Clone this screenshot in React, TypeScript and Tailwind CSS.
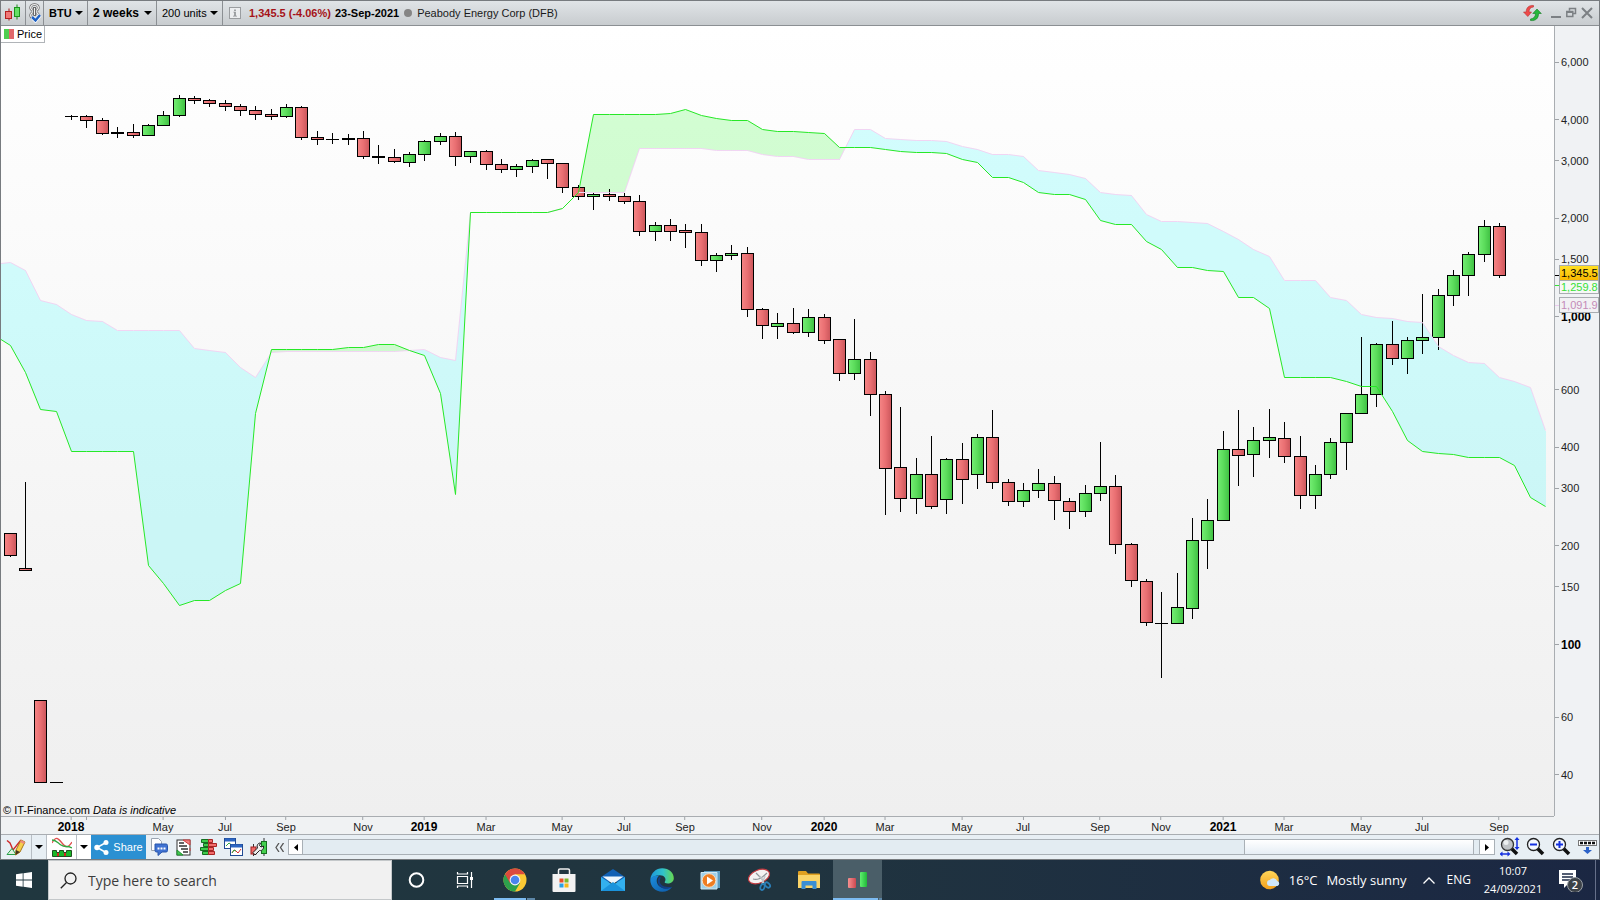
import type { ReactNode } from "react";

type Kind = "u" | "d";
// [kind, high, body top, body bottom, low], in plot rows
type Candle = [Kind, number, number, number, number];

const PLOT = { x: 1, y: 26, w: 1553, h: 790 };

const CANDLES: Candle[] = [
  ["d", 533, 533, 555, 556], ["d", 482, 568, 570, 570], ["d", 700, 700, 782, 782], ["d", 782, 782, 782, 782],
  ["d", 115, 116, 116, 119], ["d", 115, 116, 120, 127], ["d", 118, 120, 133, 134], ["d", 127, 132, 133, 137],
  ["d", 124, 132, 135, 137], ["u", 124, 125, 135, 135], ["u", 111, 115, 125, 125], ["u", 95, 98, 115, 116],
  ["d", 96, 98, 100, 103], ["d", 99, 100, 103, 106], ["d", 100, 103, 106, 110], ["d", 104, 106, 110, 115],
  ["d", 106, 110, 114, 119], ["d", 109, 114, 116, 119], ["u", 104, 107, 116, 117], ["d", 106, 107, 137, 139],
  ["d", 131, 137, 139, 144], ["d", 133, 139, 139, 143], ["d", 134, 138, 139, 144], ["d", 131, 138, 156, 158],
  ["d", 145, 156, 157, 163], ["d", 149, 157, 161, 162], ["u", 152, 154, 162, 166], ["u", 140, 141, 154, 160],
  ["u", 133, 136, 141, 144], ["d", 132, 136, 156, 165], ["u", 151, 151, 156, 162], ["d", 150, 151, 164, 169],
  ["d", 159, 164, 169, 172], ["u", 164, 166, 169, 176], ["u", 159, 160, 166, 172], ["d", 159, 159, 163, 178],
  ["d", 163, 163, 187, 192], ["d", 185, 187, 196, 199], ["u", 193, 194, 196, 209], ["d", 189, 194, 196, 200],
  ["d", 193, 196, 201, 203], ["d", 195, 201, 231, 235], ["u", 222, 225, 231, 240], ["d", 219, 225, 231, 240],
  ["d", 224, 230, 232, 247], ["d", 224, 232, 260, 265], ["u", 253, 255, 260, 271], ["u", 245, 253, 255, 259],
  ["d", 247, 253, 309, 316], ["d", 308, 309, 325, 338], ["u", 313, 323, 326, 338], ["d", 308, 323, 332, 333],
  ["u", 309, 317, 332, 336], ["d", 314, 317, 340, 343], ["d", 339, 339, 373, 380], ["u", 319, 359, 373, 379],
  ["d", 352, 359, 394, 415], ["d", 391, 394, 468, 514], ["d", 407, 467, 498, 511], ["u", 458, 474, 498, 513],
  ["d", 436, 474, 506, 508], ["u", 458, 459, 499, 513], ["d", 443, 459, 479, 503], ["u", 434, 437, 474, 488],
  ["d", 410, 437, 482, 488], ["d", 479, 482, 501, 505], ["u", 483, 490, 501, 506], ["u", 469, 483, 490, 497],
  ["d", 476, 483, 500, 519], ["d", 498, 501, 511, 528], ["u", 485, 493, 511, 516], ["u", 442, 486, 493, 500],
  ["d", 475, 486, 544, 553], ["d", 543, 544, 580, 586], ["d", 579, 581, 622, 625], ["d", 592, 623, 623, 677],
  ["u", 573, 607, 623, 623], ["u", 518, 540, 608, 618], ["u", 499, 520, 540, 568], ["u", 431, 449, 520, 520],
  ["d", 410, 449, 455, 485], ["u", 427, 440, 454, 476], ["u", 409, 437, 440, 457], ["d", 422, 438, 456, 462],
  ["d", 436, 456, 495, 508], ["u", 465, 474, 495, 508], ["u", 438, 442, 474, 478], ["u", 413, 413, 442, 469],
  ["u", 337, 394, 413, 413], ["u", 343, 344, 394, 406], ["d", 321, 344, 358, 364], ["u", 337, 340, 358, 373],
  ["u", 294, 337, 340, 353], ["u", 289, 295, 337, 349], ["u", 270, 275, 295, 305], ["u", 252, 254, 275, 295],
  ["u", 220, 226, 254, 261], ["d", 223, 226, 275, 277],
];

// Ichimoku spans, one value per unit
const SPAN_A = [
  345, 372, 409, 411, 451, 451, 451, 451, 451, 565, 583, 605, 600, 600, 590, 583, 413, 349, 349, 349,
  349, 349, 347, 347, 344, 344, 350, 355, 393, 494, 212, 212, 212, 212, 212, 212, 208, 192, 114, 114,
  114, 114, 114, 113, 109, 115, 118, 120, 120, 129, 131, 131, 132, 133, 147, 147, 147, 149, 151, 152,
  152, 153, 159, 162, 177, 177, 182, 192, 194, 194, 199, 220, 224, 224, 241, 249, 267, 267, 270, 271,
  297, 297, 308, 377, 377, 377, 377, 381, 386, 386, 411, 440, 451, 453, 454, 457, 457, 457, 465, 497, 506,
];
const SPAN_B = [
  262, 270, 300, 304, 314, 320, 321, 330, 330, 330, 330, 330, 348, 350, 352, 367, 377, 352, 351, 351,
  351, 351, 351, 351, 351, 351, 350, 349, 357, 360, 212, 212, 212, 212, 212, 212, 208, 192, 192, 192,
  192, 148, 148, 148, 148, 148, 150, 150, 150, 154, 156, 156, 159, 159, 159, 129, 129, 138, 139, 140,
  140, 141, 146, 149, 154, 154, 156, 170, 172, 174, 178, 192, 194, 195, 214, 221, 221, 222, 223, 231,
  239, 249, 256, 280, 280, 280, 297, 300, 314, 317, 318, 321, 322, 346, 355, 362, 363, 377, 381, 387, 430,
];

const TIME_LABELS: [number, string][] = [
  [4, "2018"], [10, "May"], [14, "Jul"], [18, "Sep"], [23, "Nov"], [27, "2019"], [31, "Mar"], [36, "May"],
  [40, "Jul"], [44, "Sep"], [49, "Nov"], [53, "2020"], [57, "Mar"], [62, "May"], [66, "Jul"], [71, "Sep"],
  [75, "Nov"], [79, "2021"], [83, "Mar"], [88, "May"], [92, "Jul"], [97, "Sep"],
];

const PRICES = [6000, 4000, 3000, 2000, 1500, 1000, 600, 400, 300, 200, 150, 100, 60, 40];

const unitX = (i: number) => Math.floor(10.2 + 15.355 * i);
const priceY = (p: number) => 317 + Math.log10(1000 / p) * 327.5;
const pctX = (x: number) => `${((x - PLOT.x) / PLOT.w) * 100}%`;
const pctY = (y: number) => `${((y - PLOT.y) / PLOT.h) * 100}%`;

type Point = { x: number; a: number; b: number };
const POINTS: Point[] = [
  { x: 1, a: 339.5, b: 263.5 },
  ...SPAN_A.map((a, i) => ({ x: unitX(i) + 0.5, a: a + 0.5, b: SPAN_B[i] + 0.5 })),
];

// splits the cloud wherever the two spans cross
function cloudPath(bullish: boolean) {
  let d = "";
  for (let i = 1; i < POINTS.length; i++) {
    let p = POINTS[i - 1];
    let q = POINTS[i];
    const dp = p.b - p.a;
    const dq = q.b - q.a;
    if (dp * dq < 0) {
      const t = dp / (dp - dq);
      const y = p.a + (q.a - p.a) * t;
      const mid = { x: p.x + (q.x - p.x) * t, a: y, b: y };
      if (dp > 0 === bullish) q = mid;
      else p = mid;
    } else if (dp + dq > 0 !== bullish) continue;
    d += `M${p.x} ${p.a}L${q.x} ${q.a}L${q.x} ${q.b}L${p.x} ${p.b}Z`;
  }
  return d;
}

const linePath = (key: "a" | "b") => "M" + POINTS.map((p) => `${p.x} ${p[key]}`).join("L");

function PriceChart() {
  return (
    <svg
      className="block h-full w-full"
      viewBox={`${PLOT.x} ${PLOT.y} ${PLOT.w} ${PLOT.h}`}
      preserveAspectRatio="none"
      role="img"
      aria-label="Peabody Energy Corp price"
    >
      <defs>
        <linearGradient id="up">
          <stop offset="0" stopColor="#74ee74" />
          <stop offset="0.5" stopColor="#5bdc5b" />
          <stop offset="1" stopColor="#3fbf43" />
        </linearGradient>
        <linearGradient id="down">
          <stop offset="0" stopColor="#f58585" />
          <stop offset="0.5" stopColor="#e96f72" />
          <stop offset="1" stopColor="#cb565b" />
        </linearGradient>
      </defs>
      <g shapeRendering="crispEdges">
        <path d={cloudPath(false)} fill="#00ffff" fillOpacity="0.17" />
        <path d={cloudPath(true)} fill="#00ff00" fillOpacity="0.17" />
      </g>
      <g stroke="#000" shapeRendering="crispEdges">
        {CANDLES.map(([kind, high, top, bottom, low], i) => {
          const x = unitX(i);
          return (
            <g key={i}>
              {low > high && <path d={`M${x + 0.5} ${high}V${low + 1}`} />}
              {bottom > top ? (
                <rect
                  x={x - 5.5}
                  y={top + 0.5}
                  width="12"
                  height={bottom - top}
                  fill={kind === "u" ? "url(#up)" : "url(#down)"}
                />
              ) : (
                <path d={`M${x - 6} ${top + 0.5}h13`} />
              )}
            </g>
          );
        })}
      </g>
      <path d={linePath("b")} fill="none" stroke="#f1d5f3" />
      <path d={linePath("a")} fill="none" stroke="#27e827" />
    </svg>
  );
}

function Caret() {
  return <span className="block h-0 w-0 border-x-[4px] border-t-[4px] border-x-transparent border-t-black" />;
}

function Picker({ label, value, options, className }: { label: string; value: string; options: string[]; className: string }) {
  return (
    <label className={`relative flex h-full items-center border-r border-[#8b8f93] ${className}`}>
      <select aria-label={label} defaultValue={value} className="h-full w-full appearance-none bg-transparent pl-[5px]">
        {options.map((o) => (
          <option key={o}>{o}</option>
        ))}
      </select>
      <span className="pointer-events-none absolute right-1">
        <Caret />
      </span>
    </label>
  );
}

function TopBar() {
  return (
    <header className="flex h-[25px] shrink-0 items-center border-b border-[#8b8f93] bg-linear-to-b from-[#e0e4e7] to-[#c8cccf]">
      <button aria-label="Chart type" className="flex h-full w-[25px] items-center justify-center border-r border-[#8b8f93]">
        <svg width="18" height="18" viewBox="0 0 18 18">
          <path d="M5 4.500v12" stroke="#a01818" />
          <rect x="1.500" y="7.500" width="6" height="7" fill="#f07878" stroke="#b42020" />
          <path d="M13 .5v15" stroke="#1c8c1c" />
          <rect x="10.500" y="3.500" width="5" height="9" fill="#66e066" stroke="#1c941c" />
        </svg>
      </button>
      <button aria-label="Link window" className="flex h-full w-[18px] items-center justify-center border-r border-[#8b8f93]">
        <svg width="14" height="20" viewBox="0 0 14 20" fill="none">
          <path d="M4.500 7.500C1 5 3 1.500 6.500 1.500s5.500 3.500 2 6M4.500 9.500C1 12 3 15.500 6.500 15.500s5.500-3.500 2-6" stroke="#6a6a6a" strokeWidth="2.600" />
          <path d="M4.500 7.500C1 5 3 1.500 6.500 1.500s5.500 3.500 2 6M4.500 9.500C1 12 3 15.500 6.500 15.500s5.500-3.500 2-6" stroke="#f2f2f2" strokeWidth="1.200" />
          <path d="M6.500 4v9" stroke="#6a6a6a" strokeWidth="3" />
          <path d="M6.500 5v7" stroke="#f2f2f2" />
          <path d="m4 14 3.500 3.500L12 12" stroke="#fff" strokeWidth="4" />
          <path d="m4 14 3.500 3.500L12 12" stroke="#1f62c4" strokeWidth="2.500" />
        </svg>
      </button>
      <Picker label="Symbol" value="BTU" options={["BTU"]} className="w-[44px] font-bold" />
      <Picker label="Timeframe" value="2 weeks" options={["1 week", "2 weeks"]} className="w-[69px] text-[12px] font-bold" />
      <Picker label="Units" value="200 units" options={["200 units", "500 units"]} className="w-[66px]" />
      <button aria-label="Instrument information" className="ml-[6px] flex size-[12px] items-center justify-center border border-[#9a9da0] bg-[#eceef0]">
        <svg width="4" height="8" viewBox="0 0 5 9" fill="#8d9093">
          <path d="M1.500 0h2v2h-2zM.5 3h3v5H5v1H0V8h1.500V4h-1z" />
        </svg>
      </button>
      <p className="ml-2 flex items-center gap-1">
        <span className="font-bold text-[#a51218]">1,345.5 (-4.06%)</span>
        <span className="font-bold">23-Sep-2021</span>
        <span className="mx-px size-2 rounded-full bg-[#858585]" />
        <span className="text-[#1a1a1a]">Peabody Energy Corp (DFB)</span>
      </p>
      <div className="ml-auto flex items-center gap-1 pr-[6px]">
        <button aria-label="Refresh" className="mr-[5px]">
          <svg width="19" height="18" viewBox="0 0 19 18" strokeLinejoin="round" strokeWidth=".6">
            <path d="M10.500 1.500C6 .8 3 4 3.200 8H.5l4.300 4.500L8.500 8H6c0-3 1.500-4.800 4.500-5z" fill="#ee4a4a" stroke="#b83030" />
            <path d="M7.500 16.500c5 .7 8.200-2.200 8-7h2.800L14 5 9.800 9.500h2.700c0 3.300-1.700 5-5 5.500z" fill="#27b83a" stroke="#117a22" />
          </svg>
        </button>
        <button aria-label="Minimise">
          <svg width="11" height="12" viewBox="0 0 11 12"><path d="M0 10h10" stroke="#7c8084" strokeWidth="2" /></svg>
        </button>
        <button aria-label="Restore">
          <svg width="11" height="12" viewBox="0 0 11 12" fill="none" stroke="#7c8084" strokeWidth="1.500">
            <path d="M3.500 3.500v-2h6v5H7.500M.8 4.500h6v5h-6zM.8 5.200h6" />
          </svg>
        </button>
        <button aria-label="Close">
          <svg width="12" height="12" viewBox="0 0 12 12"><path d="m1 1 10 10M11 1 1 11" stroke="#7c8084" strokeWidth="2" /></svg>
        </button>
      </div>
    </header>
  );
}

const TAGS = [
  { y: 273, text: "1,345.5", style: "h-[16px] bg-linear-to-b from-[#ffe020] to-[#f8b800] text-black" },
  { y: 287, text: "1,259.8", style: "h-[14px] bg-[#f6f8f6] text-[#35e035]" },
  { y: 305, text: "1,091.9", style: "h-[16px] bg-[#f2f1f4] text-[#c48bb8]" },
];

function PriceAxis() {
  return (
    <div className="relative border-l border-[#a9adb1] bg-[#f0f2f4]">
      {PRICES.map((p) => {
        const major = p === 1000 || p === 100;
        return (
          <div key={p} className="absolute left-0 flex h-4 -translate-y-1/2 items-center gap-[2px]" style={{ top: pctY(priceY(p)) }}>
            <span className="h-px w-1 bg-[#9fa3a7]" />
            <span className={major ? "text-[12px] font-bold" : "text-[#222]"}>{p.toLocaleString("en-US")}</span>
          </div>
        );
      })}
      <span className="absolute left-0 h-px w-1 bg-black" style={{ top: pctY(275) }} />
      <span className="absolute left-0 h-px w-1 bg-[#35e035]" style={{ top: pctY(285) }} />
      <span className="absolute left-0 h-px w-1 bg-[#ecccee]" style={{ top: pctY(305) }} />
      {TAGS.map((t) => (
        <div
          key={t.text}
          className={`absolute right-0 left-1 flex -translate-y-1/2 items-center border border-[#a9adb1] pl-px ${t.style}`}
          style={{ top: pctY(t.y) }}
        >
          {t.text}
        </div>
      ))}
    </div>
  );
}

function TimeAxis() {
  return (
    <div className="relative h-[18px] border-t border-[#a9adb1]">
      <span className="absolute top-0 h-[3px] w-px bg-[#9fa3a7]" style={{ left: pctX(unitX(5)) }} />
      {TIME_LABELS.map(([i, label]) => (
        <div key={i} className="absolute top-0 flex -translate-x-1/2 flex-col items-center" style={{ left: pctX(unitX(i)) }}>
          <span className="h-[3px] w-px bg-[#9fa3a7]" />
          <span className={/^\d/.test(label) ? "text-[12px] leading-[14px] font-bold" : "leading-[14px] text-[#222]"}>{label}</span>
        </div>
      ))}
    </div>
  );
}

function ToolButton({ label, className = "w-[25px]", children }: { label: string; className?: string; children: ReactNode }) {
  return (
    <button aria-label={label} className={`flex h-full shrink-0 items-center justify-center ${className}`}>
      {children}
    </button>
  );
}

function Lens({ children }: { children: ReactNode }) {
  return (
    <svg width="20" height="20" viewBox="0 0 20 20" fill="none">
      <path d="m11 11 6 6" stroke="#111" strokeWidth="3.500" />
      <circle cx="7.500" cy="7.500" r="6" fill="#f4f8ff" stroke="#222" strokeWidth="1.300" />
      {children}
    </svg>
  );
}

function BottomBar() {
  return (
    <div className="flex h-[25px] shrink-0 items-center border-t border-[#a9adb1] bg-[#e8eff4]">
      <ToolButton label="Drawing tools" className="w-[31px] border-r border-[#b8bec4]">
        <svg width="20" height="18" viewBox="0 0 20 18" fill="none">
          <path d="M1 2.500 4 5l3 7 8-10" stroke="#d02828" strokeWidth="1.400" />
          <path d="M1 16.500h9l-4-6z" fill="#dff2df" stroke="#28a048" />
          <path d="m10 12 5-10 4 2-5 10-4.500 3z" fill="#f7cf4c" stroke="#a87818" />
          <path d="m15 2 4 2-1 2-4-2z" fill="#ef8a80" />
          <path d="m10 12 4 2-4.500 3z" fill="#463420" />
        </svg>
      </ToolButton>
      <ToolButton label="Drawing tools menu" className="w-[15px] border-r border-[#b8bec4]"><Caret /></ToolButton>
      <ToolButton label="Indicators" className="w-[30px] border-r border-[#b8bec4] bg-white">
        <svg width="20" height="20" viewBox="0 0 20 20" fill="none">
          <path d="M0 6c4-7 6-5 10 0s6 5 10-1" stroke="#e05050" strokeWidth="1.300" />
          <path d="M0 3c4 0 5 2 9 5s6 0 11 3" stroke="#30a840" strokeWidth="1.300" />
          <path d="M.5 13.500h4v2h3v-2h4v2h3v-2h5v6H.5z" fill="#18b828" stroke="#205020" />
          <path d="M5 16h2v3H5zM12 16h2v3h-2z" fill="#d42020" />
        </svg>
      </ToolButton>
      <ToolButton label="Indicators menu" className="w-[14px] bg-white"><Caret /></ToolButton>
      <button className="flex h-full w-[55px] shrink-0 items-center justify-center gap-1 bg-[#2b90d2] text-white">
        <svg width="15" height="15" viewBox="0 0 15 15" fill="#fff">
          <path d="m12 2.500-9 5 9 5" fill="none" stroke="#fff" strokeWidth="1.500" />
          <circle cx="12" cy="2.500" r="2.500" />
          <circle cx="3" cy="7.500" r="2.700" />
          <circle cx="12" cy="12.500" r="2.500" />
        </svg>
        Share
      </button>
      <ToolButton label="Comments">
        <svg width="18" height="18" viewBox="0 0 18 18">
          <path d="M1.500.5h7l3 3v9h-10z" fill="#fff" stroke="#9aa4b0" />
          <path d="M5 6h11a1.500 1.500 0 0 1 1.500 1.500v5A1.500 1.500 0 0 1 16 14h-4l-4 3.500V14H6.500A1.500 1.500 0 0 1 5 12.500z" fill="#3f72d2" stroke="#2856ac" />
          <path d="M7.500 9.500h2v2h-2zM10.500 9.500h2v2h-2zM13.500 9.500h2v2h-2z" fill="#fff" />
        </svg>
      </ToolButton>
      <ToolButton label="Order list">
        <svg width="15" height="17" viewBox="0 0 15 17" fill="none">
          <rect x="1" y="1" width="13" height="15" fill="#fff" stroke="#333" />
          <path d="M7 1h7v5zM14 9v3" fill="#f08080" stroke="#d04040" />
          <path d="M1 11v5h6z" fill="#40c850" stroke="#209030" />
          <path d="M3 4h5M3 7h8M5 10h7M7 13h5" stroke="#333" strokeWidth="1.500" />
        </svg>
      </ToolButton>
      <ToolButton label="Order book">
        <svg width="18" height="17" viewBox="0 0 18 17">
          <path d="M1.500.5h7v3h-7zM3.500 4.500h5v3h-5zM.5 8.500h8v3h-8zM2.500 12.500h6v3h-6z" fill="#3ecb4c" stroke="#156f20" />
          <path d="M8.500.5h4v3h-4zM8.500 4.500h8v3h-8zM8.500 8.500h5v3h-5zM8.500 12.500h6v3h-6z" fill="#f06c6c" stroke="#a82424" />
        </svg>
      </ToolButton>
      <ToolButton label="Windows">
        <svg width="19" height="18" viewBox="0 0 19 18" fill="none">
          <rect x=".5" y=".5" width="11" height="10" fill="#fff" stroke="#204a94" />
          <path d="M1 2h10" stroke="#2c66c4" strokeWidth="3" />
          <path d="m2 8 3-3 4 3" stroke="#30a840" />
          <rect x="6.500" y="6.500" width="12" height="11" fill="#fff" stroke="#204a94" />
          <path d="M7 8h11" stroke="#2c66c4" strokeWidth="3" />
          <path d="m8 15 2-3 2 1 2 2 3-4" stroke="#d83030" />
          <path d="m8 15 2-3 2 1" stroke="#30a840" />
        </svg>
      </ToolButton>
      <ToolButton label="Trading system">
        <svg width="18" height="19" viewBox="0 0 18 19">
          <path d="M3.500 6v12M14 0v18" stroke="#333" />
          <rect x="1" y="9" width="5" height="7" fill="#f06868" stroke="#a02020" />
          <rect x="11.500" y="3.500" width="5" height="12" fill="#44d050" stroke="#157020" />
          <path d="M3 14.500 7.500 10c-1-3 .5-5 3-5L9.500 7.500l1.500 1.500 2.500-1c.5 3-1.500 5-4 4.500L5 17z" fill="#eee" stroke="#222" />
        </svg>
      </ToolButton>
      <ToolButton label="Collapse toolbar" className="w-[17px]">
        <svg width="9" height="9" viewBox="0 0 9 9" fill="none" stroke="#555" strokeWidth="1.300"><path d="M4 0 1 4.500 4 9M8.500 0l-3 4.500 3 4.500" /></svg>
      </ToolButton>
      <div className="flex h-4 min-w-0 flex-1 border border-[#a9b0b6] bg-[#e3ecf2]">
        <button aria-label="Scroll left" className="flex w-[14px] items-center justify-center border-r border-[#a9b0b6] bg-white">
          <svg width="4" height="7" viewBox="0 0 4 7"><path d="M4 0v7L0 3.500z" /></svg>
        </button>
        <div className="flex flex-1 justify-end pr-[5px]">
          <div className="w-[230px] border-x border-[#a9b0b6] bg-linear-to-b from-white to-[#e6eef5]" />
        </div>
        <button aria-label="Scroll right" className="flex w-[15px] items-center justify-center border-l border-[#a9b0b6] bg-white">
          <svg width="4" height="7" viewBox="0 0 4 7"><path d="M0 0v7l4-3.500z" /></svg>
        </button>
      </div>
      <ToolButton label="Fit chart" className="ml-[2px] w-[26px]">
        <svg width="20" height="20" viewBox="0 0 20 20" fill="none">
          <path d="m11 11 6 6" stroke="#111" strokeWidth="3.500" />
          <circle cx="7.500" cy="7.500" r="6" fill="#bfc3c6" stroke="#333" strokeWidth="1.300" />
          <circle cx="6" cy="5.500" r="2.500" fill="#eceff0" />
          <path d="M17 2v9M1 17h8" stroke="#1430e0" strokeWidth="1.500" />
          <path d="M17 0l-2.500 3h5zM17 13l-2.500-3h5zM-.5 17l3-2.500v5zM10.500 17l-3-2.500v5z" fill="#1430e0" />
        </svg>
      </ToolButton>
      <ToolButton label="Zoom out" className="w-[26px]">
        <Lens><path d="M4 7.500h7" stroke="#1430e0" strokeWidth="2" /></Lens>
      </ToolButton>
      <ToolButton label="Zoom in" className="w-[26px]">
        <Lens><path d="M4 7.500h7M7.500 4v7" stroke="#1430e0" strokeWidth="2" /></Lens>
      </ToolButton>
      <ToolButton label="Show keyboard" className="w-[24px]">
        <svg width="19" height="16" viewBox="0 0 19 16" fill="none">
          <rect x=".5" y="1.500" width="18" height="5" fill="#fff" stroke="#777" />
          <path d="M2 4h15" stroke="#111" strokeWidth="2.500" strokeDasharray="3 1" />
          <path d="M8 8h3v3h3l-4.500 4L5 11h3z" fill="#2c62c8" />
        </svg>
      </ToolButton>
    </div>
  );
}

const APPS: { label: string; state?: "open" | "active"; icon: ReactNode }[] = [
  {
    label: "Cortana",
    icon: <svg width="18" height="18" viewBox="0 0 18 18"><circle cx="8.500" cy="9" r="6.800" fill="none" stroke="#fff" strokeWidth="2" /></svg>,
  },
  {
    label: "Task view",
    icon: (
      <svg width="20" height="18" viewBox="0 0 20 18" fill="none" stroke="#fff" strokeWidth="1.200">
        <path d="M1.500 5.500h10v7h-10zM1.500 1v2h10V1M1.500 17v-2h10v2M15.500 1v16" />
        <path d="M14 6h3v3h-3z" fill="#fff" stroke="none" />
      </svg>
    ),
  },
  {
    label: "Chrome",
    state: "open",
    icon: (
      <svg width="24" height="24" viewBox="0 0 24 24">
        <circle cx="12" cy="12" r="11.500" fill="#fbc934" />
        <path d="M12 12 2.040 6.250A11.500 11.500 0 0 0 12 23.500l5-8.600z" fill="#2da14c" />
        <path d="M2.040 6.250A11.500 11.500 0 0 1 21.960 6.250H12L7 14.900z" fill="#dc4a3d" />
        <circle cx="12" cy="12" r="5.400" fill="#f5f5f5" />
        <circle cx="12" cy="12" r="4.300" fill="#4a84ee" />
      </svg>
    ),
  },
  {
    label: "Microsoft Store",
    icon: (
      <svg width="24" height="24" viewBox="0 0 24 24" fill="none">
        <path d="M6.500 7V2.500q0-1.500 1.500-1.500h8q1.500 0 1.500 1.500V7" stroke="#f0f0f0" strokeWidth="1.500" />
        <path d="M.5 6h23v17q0 1-1 1h-21q-1 0-1-1z" fill="#f2f2f2" />
        <path d="M7.500 10.500h4v4h-4z" fill="#e8502a" />
        <path d="M12.500 10.500h4v4h-4z" fill="#7db82c" />
        <path d="M7.500 15.500h4v4h-4z" fill="#2ba0e4" />
        <path d="M12.500 15.500h4v4h-4z" fill="#f8b818" />
      </svg>
    ),
  },
  {
    label: "Mail",
    icon: (
      <svg width="24" height="24" viewBox="0 0 24 24">
        <path d="M0 9 12 1l12 8v5H0z" fill="#1160b4" />
        <path d="M1.500 8.500h21L12 16z" fill="#eef6fc" />
        <path d="M0 9v14h24V9l-12 8z" fill="#33b0ee" />
        <path d="m0 23 12-9 12 9z" fill="#1b93dc" />
      </svg>
    ),
  },
  {
    label: "Edge",
    icon: (
      <svg width="24" height="24" viewBox="0 0 24 24">
        <defs>
          <linearGradient id="edgeTop"><stop offset="0" stopColor="#1d98dd" /><stop offset=".55" stopColor="#31c3c9" /><stop offset="1" stopColor="#67d84f" /></linearGradient>
          <linearGradient id="edgeBody" x1="0" y1="0" x2="1" y2="1"><stop offset="0" stopColor="#1c8ede" /><stop offset="1" stopColor="#0d5aa8" /></linearGradient>
        </defs>
        <path d="M.3 11.500C1 5 6 .3 12.200.3 19 .3 24 5 23.800 10.500c-.2 3.500-3 5-6 5-2.400 0-3.600-.8-3-1.700 2-3-.4-6.600-4.800-6.600-4.500 0-8.500 2-9.700 4.300z" fill="url(#edgeTop)" />
        <path d="M.3 11.500C1.500 8.500 5.500 7.200 9.300 7.600 6 10 5.800 15 9 18c4 3.500 9 2.600 13 .7C20 22 16.500 23.800 12.200 23.800 5.500 23.800 0 18.500.3 11.500z" fill="url(#edgeBody)" />
        <path d="M9.300 9C6.800 12 7.500 17 11 19.300c4 2.500 8 1.500 11 0-2.500-.5-9 .5-11.500-3.500-1.500-2.300-.5-4.800.5-6.300z" fill="#123f86" />
      </svg>
    ),
  },
  {
    label: "Media player",
    icon: (
      <svg width="21" height="20" viewBox="0 0 21 20">
        <path d="M4 1h16v17H4z" fill="#5d9cc0" />
        <path d="M1 2.500h16V19H1z" fill="#9cd0ea" stroke="#d0e8f4" />
        <circle cx="9" cy="10.500" r="6.800" fill="#ee7d22" stroke="#f9ddc0" />
        <path d="m7 6.500 6 4-6 4z" fill="#fff" />
      </svg>
    ),
  },
  {
    label: "Snipping tool",
    icon: (
      <svg width="25" height="24" viewBox="0 0 25 24" fill="none">
        <ellipse cx="12" cy="8.500" rx="11" ry="6.500" transform="rotate(-22 12 8.500)" fill="#f4f2f2" stroke="#c43a40" strokeWidth="1.200" />
        <path d="M6 11c3 1 8 0 14-6M9 5l8 8" stroke="#8e9498" strokeWidth="1.200" />
        <path d="m13 8 4 7M18 8l-3 8" stroke="#c2c8cc" strokeWidth="1.500" />
        <ellipse cx="15.500" cy="19" rx="2" ry="3" transform="rotate(20 15.500 19)" stroke="#2b7fb8" strokeWidth="1.800" />
        <ellipse cx="20.500" cy="17" rx="2" ry="3" transform="rotate(-45 20.500 17)" stroke="#2b7fb8" strokeWidth="1.800" />
      </svg>
    ),
  },
  {
    label: "File explorer",
    icon: (
      <svg width="22" height="20" viewBox="0 0 22 20">
        <path d="M0 2q0-1 1-1h7l2 2.500h11q1 0 1 1V18H0z" fill="#e0a020" />
        <path d="M0 5h22v13H0z" fill="#fad468" />
        <path d="M3.500 12q0-1 1-1h13q1 0 1 1v7h-4v-3.500h-7V19h-4z" fill="#3b8fd4" />
      </svg>
    ),
  },
  {
    label: "ProRealTime",
    state: "active",
    icon: (
      <svg width="20" height="18" viewBox="0 0 20 18">
        <defs>
          <linearGradient id="appRed"><stop offset="0" stopColor="#f89090" /><stop offset="1" stopColor="#cc4850" /></linearGradient>
          <linearGradient id="appGreen"><stop offset="0" stopColor="#60f070" /><stop offset="1" stopColor="#20b838" /></linearGradient>
        </defs>
        <rect x="0" y="7" width="8" height="10" rx="1" fill="url(#appRed)" />
        <rect x="12" y="1" width="7" height="15" rx="1" fill="url(#appGreen)" />
      </svg>
    ),
  },
];

function Taskbar() {
  return (
    <footer className="flex h-10 shrink-0 items-stretch bg-linear-to-r from-[#20373f] via-[#20343f] to-[#1b2743] font-['Open_Sans',sans-serif] text-white">
      <button aria-label="Start" className="flex w-12 items-center justify-center">
        <svg width="16" height="16" viewBox="0 0 16 16" fill="#fff">
          <path d="M0 2.200 6.700 1.300v6.300H0zM7.500 1.200 16 0v7.600H7.500zM0 8.400h6.700v6.300L0 13.800zM7.500 8.400H16V16l-8.500-1.200z" />
        </svg>
      </button>
      <label className="flex w-[344px] items-center gap-[11px] border border-[#c4c8ca] bg-[#f1f1f1] pl-[11px]">
        <svg width="17" height="17" viewBox="0 0 17 17" fill="none" stroke="#222" strokeWidth="1.300">
          <circle cx="10.500" cy="6.500" r="5.500" />
          <path d="M6.500 10.500.8 16.200" />
        </svg>
        <input
          type="text"
          aria-label="Type here to search"
          placeholder="Type here to search"
          className="min-w-0 flex-1 bg-transparent text-[14px] text-[#3c3c3c] outline-none placeholder:text-[#3c3c3c]"
        />
      </label>
      <nav className="flex">
        {APPS.map((app) => (
          <button
            key={app.label}
            aria-label={app.label}
            className={`relative flex w-[49px] items-center justify-center ${app.state === "active" ? "bg-[#4a5e68]" : ""}`}
          >
            {app.icon}
            {app.state && (
              <span className={`absolute inset-x-0 bottom-0 flex h-[2px] gap-px ${app.state === "open" ? "px-1" : ""}`}>
                <span className="flex-1 bg-[#7dbcf2]" />
                <span className={app.state === "open" ? "w-2 bg-[#5d87a8]" : "w-[3px] bg-[#5d87a8]"} />
              </span>
            )}
          </button>
        ))}
      </nav>
      <div className="ml-auto flex items-center">
        <button className="flex items-center gap-[9px] text-[13px]">
          <svg width="20" height="20" viewBox="0 0 20 20">
            <defs>
              <linearGradient id="sun" x2="0" y2="1"><stop offset="0" stopColor="#ffd65a" /><stop offset="1" stopColor="#f3a01c" /></linearGradient>
            </defs>
            <circle cx="9.500" cy="10" r="9.300" fill="url(#sun)" />
            <path d="M10 16a3 3 0 0 1 0-6 4 4 0 0 1 7.200 1 2.600 2.600 0 0 1 .3 5z" fill="#cfe7fa" />
          </svg>
          <span>16°C</span>
          <span>Mostly sunny</span>
        </button>
        <button aria-label="Show hidden icons" className="ml-4 flex w-3 justify-center">
          <svg width="12" height="7" viewBox="0 0 12 7" fill="none" stroke="#fff" strokeWidth="1.300"><path d="m.5 6.500 5.500-5.500 5.500 5.500" /></svg>
        </button>
        <button className="ml-3 text-[12px]">ENG</button>
        <button className="ml-3 flex w-[60px] flex-col items-center text-[11px] leading-[18px]">
          <span>10:07</span>
          <span>24/09/2021</span>
        </button>
        <button aria-label="2 notifications" className="relative ml-4 h-6 w-6">
          <svg width="24" height="24" viewBox="0 0 24 24">
            <path d="M0 2h17v14H9l-4 4v-4H0z" fill="#fff" />
            <path d="M3 6h11M3 9h11M3 12h8" stroke="#1c2a45" strokeWidth="1.300" />
            <circle cx="16" cy="17" r="7.500" fill="#3c4248" stroke="#9aa0a6" />
          </svg>
          <span className="absolute top-[10px] left-3 w-2 text-center text-[11px] leading-[14px] font-semibold">2</span>
        </button>
        <span className="ml-3 h-10 w-[5px] border-l border-[#66708a]" />
      </div>
    </footer>
  );
}

export default function App() {
  return (
    <div className="flex h-screen flex-col overflow-hidden font-['Liberation_Sans',Arial,sans-serif] text-[11px] leading-[14px] text-black">
      <main className="flex min-h-0 flex-1 flex-col border border-[#777b7f]">
        <TopBar />
        <div className="grid min-h-0 flex-1 grid-cols-[1fr_45px] grid-rows-[1fr_18px] bg-[#f0f2f3]">
          <section className="relative min-h-0 bg-linear-to-b from-white to-[#efefef]">
            <PriceChart />
            <div className="absolute top-0 left-0 flex h-[17px] w-[44px] items-center gap-[3px] border-r border-b border-[#b0b4b8] bg-white pl-[3px]">
              <span className="flex size-[10px]">
                <span className="w-1/2 bg-[#4fce50]" />
                <span className="w-1/2 bg-[#e0686c]" />
              </span>
              Price
            </div>
            <p className="absolute bottom-0 left-0 flex gap-[3px] pl-[2px] leading-[12px]">
              <span>© IT-Finance.com</span>
              <em>Data is indicative</em>
            </p>
          </section>
          <PriceAxis />
          <TimeAxis />
        </div>
        <BottomBar />
      </main>
      <Taskbar />
    </div>
  );
}
